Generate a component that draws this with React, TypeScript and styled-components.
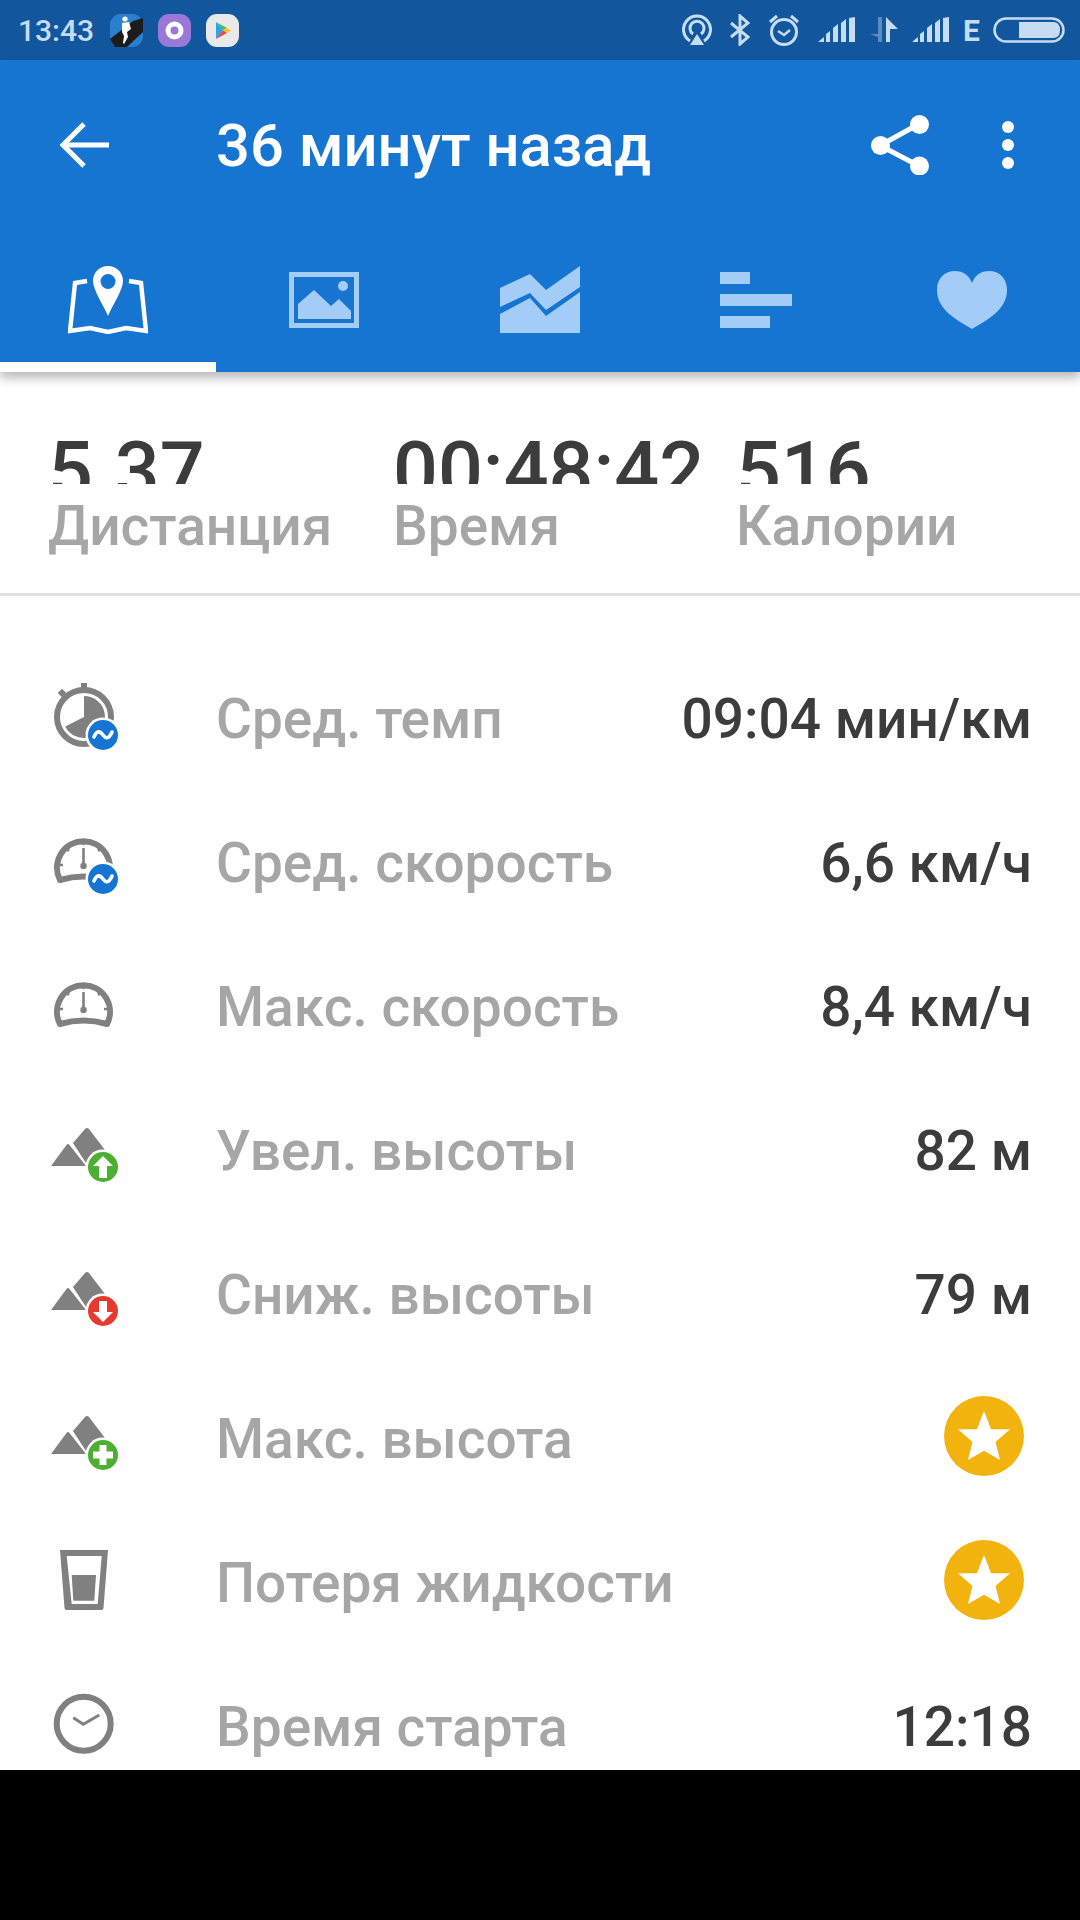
import React from "react";
import styled, { createGlobalStyle } from "styled-components";

const GlobalStyle = createGlobalStyle`
  html, body {
    margin: 0;
    padding: 0;
    background: #000;
    font-family: Roboto, "Noto Sans", sans-serif;
  }
`;

const Screen = styled.div`
  width: 1080px;
  height: 1770px;
  background: #fff;
  overflow: hidden;
`;

const StatusBar = styled.div`
  height: 60px;
  background: #12579d;
  display: flex;
  align-items: center;
  padding: 0 15px 0 18px;
  color: #c6dcf2;
`;

const Time = styled.span`
  font-size: 30px;
  font-weight: 500;
  width: 92px;
`;

const AppIcons = styled.div`
  display: flex;
  gap: 15px;
`;

const SystemIcons = styled.div`
  margin-left: auto;
  display: flex;
  align-items: center;
`;

const SystemIcon = styled.svg<{ $gap?: number }>`
  display: block;
  margin-left: ${p => p.$gap ?? 0}px;
`;

const NetType = styled.span`
  margin-left: 14px;
  width: 16px;
  font-size: 30px;
  font-weight: 700;
`;

const Header = styled.header`
  background: #1675d1;
  height: 312px;
  position: relative;
  z-index: 1;
  box-shadow: 0 6px 10px rgba(0, 0, 0, 0.28);
`;

const Toolbar = styled.div`
  height: 170px;
  display: flex;
  align-items: center;
  padding: 0 0 4px 60px;
  color: #fff;
`;

const Title = styled.h1`
  margin: 2px 0 0 107px;
  font-size: 59.7px;
  font-weight: 500;
`;

const Actions = styled.div`
  margin-left: auto;
  display: flex;
  align-items: center;
  gap: 73px;
  padding-right: 66px;
`;

const Tabs = styled.div`
  display: grid;
  grid-template-columns: repeat(5, 216px);
  height: 138px;
`;

const Tab = styled.div<{ $active?: boolean }>`
  display: flex;
  justify-content: center;
  padding-top: 32px;
  box-sizing: border-box;
  color: ${p => (p.$active ? "#fff" : "#a3cdf7")};
  border-bottom: 10px solid ${p => (p.$active ? "#fff" : "transparent")};
`;

const Stats = styled.section`
  display: grid;
  grid-template-columns: 345px 343px 1fr;
  padding-left: 48px;
  height: 221px;
  border-bottom: 3px solid #e0e0e0;
`;

const StatValue = styled.div`
  box-sizing: border-box;
  height: 112px;
  padding-top: 59px;
  overflow: hidden;
  font-size: 79px;
  line-height: 80px;
  font-weight: 500;
  color: #3c3c3c;
`;

const StatLabel = styled.div`
  font-size: 55px;
  line-height: 60px;
  color: #a6a6a6;
  font-weight: 500;
  margin-top: 12px;
`;

const Rows = styled.div`
  padding-top: 52px;
`;

const Row = styled.div`
  height: 144px;
  display: flex;
  align-items: center;
  padding: 0 48px 0 50px;
`;

const RowIcon = styled.svg`
  width: 80px;
  height: 80px;
  flex: none;
`;

const RowLabel = styled.span`
  margin: 0 0 2px 86px;
  font-size: 55px;
  font-weight: 500;
  color: #a6a6a6;
`;

const RowValue = styled.span`
  margin: 0 0 2px auto;
  font-size: 55px;
  font-weight: 500;
  color: #3c3c3c;
`;

const Premium = styled.svg`
  margin-left: auto;
  margin-right: 8px;
  margin-bottom: 8px;
  width: 80px;
  height: 80px;
`;

const GRAY = "#808080";

const Badge = ({ color, children }: { color: string; children: React.ReactNode }) => (
  <>
    <circle cx="53" cy="55" r="17.5" fill="#fff" />
    <circle cx="53" cy="55" r="15" fill={color} />
    {children}
  </>
);

const AvgBadge = () => (
  <Badge color="#1675d1">
    <path d="M44 57 C47 50 50 51 53 55 S59 59 62 52" fill="none" stroke="#fff" strokeWidth="3.6" strokeLinecap="round" />
  </Badge>
);

const Stopwatch = () => (
  <RowIcon viewBox="0 0 80 80">
    <circle cx="34" cy="37" r="27" fill="none" stroke={GRAY} strokeWidth="6" />
    <rect x="31" y="3" width="6" height="7" fill={GRAY} />
    <rect x="9" y="10" width="6" height="6" fill={GRAY} transform="rotate(-45 12 13)" />
    <path d="M34 37 L34 16 A21 21 0 1 1 15.2 46.4 Z" fill={GRAY} />
    <AvgBadge />
  </RowIcon>
);

const GaugeBody = () => (
  <>
    <path
      d="M10 56 A26.5 26.5 0 1 1 57 56 Q33.5 49 10 56 Z"
      fill="none"
      stroke={GRAY}
      strokeWidth="6"
      strokeLinejoin="round"
    />
    <path
      d="M33.5 15 V21 M14.5 23 L19 27 M52.5 23 L48 27 M7 41 H13 M60 41 H54 M33.5 24 V41"
      stroke={GRAY}
      strokeWidth="2.6"
      fill="none"
    />
    <circle cx="33.5" cy="42" r="3.2" fill={GRAY} />
  </>
);

const AvgGauge = () => (
  <RowIcon viewBox="0 0 80 80">
    <GaugeBody />
    <AvgBadge />
  </RowIcon>
);

const MaxGauge = () => (
  <RowIcon viewBox="0 0 80 80">
    <GaugeBody />
  </RowIcon>
);

const Mountains = ({ children }: { children: React.ReactNode }) => (
  <RowIcon viewBox="0 0 80 80">
    <path d="M1 54 L16.5 33 Q18 31 19.5 33 L36 54 Z" fill={GRAY} />
    <path d="M23 31 L35 17 Q37 15 39 17 L55 38 L36 51 Z" fill={GRAY} />
    {children}
  </RowIcon>
);

const ElevationUp = () => (
  <Mountains>
    <Badge color="#4caf32">
      <path d="M53 44 L63 54 H57 V66 H49 V54 H43 Z" fill="#fff" />
    </Badge>
  </Mountains>
);

const ElevationDown = () => (
  <Mountains>
    <Badge color="#e53a2e">
      <path d="M53 66 L63 56 H57 V45 H49 V56 H43 Z" fill="#fff" />
    </Badge>
  </Mountains>
);

const ElevationMax = () => (
  <Mountains>
    <Badge color="#4caf32">
      <path d="M49.5 45 H56.5 V51.5 H63 V58.5 H56.5 V65 H49.5 V58.5 H43 V51.5 H49.5 Z" fill="#fff" />
    </Badge>
  </Mountains>
);

const Cup = () => (
  <RowIcon viewBox="0 0 80 80">
    <path
      d="M10 6 H58 L53.5 64 Q53.3 66 51.5 66 H16.5 Q14.7 66 14.5 64 Z M16.7 12 L21.7 60 H47.7 L51.7 12 Z"
      fill={GRAY}
      fillRule="evenodd"
    />
    <path d="M21.7 31 H46 L44.3 56.7 H23.3 Z" fill={GRAY} />
  </RowIcon>
);

const Clock = () => (
  <RowIcon viewBox="0 0 80 80">
    <circle cx="33.7" cy="35.7" r="27" fill="none" stroke={GRAY} strokeWidth="6" />
    <path d="M23.3 29.7 L33.3 36.3 L49.3 27" fill="none" stroke={GRAY} strokeWidth="3" />
  </RowIcon>
);

const Star = () => (
  <Premium viewBox="0 0 80 80">
    <circle cx="40" cy="40" r="40" fill="#f3b30f" />
    <path d="M40 14.7 L47 33.3 H66 L51.5 46 L56 64 L40 54.7 L24 64 L28.5 46 L14 33.3 H33 Z" fill="#fff" />
  </Premium>
);

const rows: { icon: React.ReactNode; label: string; value?: string }[] = [
  { icon: <Stopwatch />, label: "Сред. темп", value: "09:04 мин/км" },
  { icon: <AvgGauge />, label: "Сред. скорость", value: "6,6 км/ч" },
  { icon: <MaxGauge />, label: "Макс. скорость", value: "8,4 км/ч" },
  { icon: <ElevationUp />, label: "Увел. высоты", value: "82 м" },
  { icon: <ElevationDown />, label: "Сниж. высоты", value: "79 м" },
  { icon: <ElevationMax />, label: "Макс. высота" },
  { icon: <Cup />, label: "Потеря жидкости" },
  { icon: <Clock />, label: "Время старта", value: "12:18" },
];

const stats = [
  { value: "5.37", label: "Дистанция" },
  { value: "00:48:42", label: "Время" },
  { value: "516", label: "Калории" },
];

const Signal = ({ gap }: { gap: number }) => (
  <SystemIcon $gap={gap} width="37" height="26" viewBox="0 0 37 26" fill="#c6dcf2">
    <path d="M0 25 L6 20 V25 Z M8 25 V17 L12 14 V25 Z M15 25 V11 L20 7 V25 Z M23 25 V6 L28 2 V25 Z" />
    <path d="M31 25 V1 L37 0 V25 Z" />
  </SystemIcon>
);

const StatusIcons = () => (
  <SystemIcons>
    <SystemIcon width="30" height="32" viewBox="0 0 30 32" fill="none" stroke="#c6dcf2" strokeWidth="3">
      <path d="M8 27 A13.5 13.5 0 1 1 22 27" />
      <path d="M11 20 A7 7 0 1 1 19 20" />
      <path d="M15 20 L22 31 H8 Z" fill="#c6dcf2" stroke="none" />
    </SystemIcon>
    <SystemIcon $gap={18} width="20" height="32" viewBox="0 0 20 32" fill="none" stroke="#c6dcf2" strokeWidth="3">
      <path d="M1 9 L18 23 L10 30 V2 L18 9 L1 23" />
    </SystemIcon>
    <SystemIcon $gap={18} width="32" height="32" viewBox="0 0 32 32" fill="none" stroke="#c6dcf2" strokeWidth="3">
      <circle cx="16" cy="18" r="12.5" />
      <path d="M10 17 L16 21 L22 16" strokeWidth="2.5" />
      <path d="M2 8 L9 2 M30 8 L23 2" />
    </SystemIcon>
    <Signal gap={18} />
    <SystemIcon $gap={15} width="28" height="26" viewBox="0 0 28 26">
      <path d="M8 0 H12 V25 H8 V20 L0 17 H8 Z" fill="#5b8dc2" />
      <path d="M16 0 L28 12 H20 V25 H16 Z" fill="#c6dcf2" />
    </SystemIcon>
    <Signal gap={14} />
    <NetType>E</NetType>
    <SystemIcon $gap={14} width="72" height="26" viewBox="0 0 72 26" fill="none">
      <rect x="1.5" y="1.5" width="69" height="23" rx="11.5" stroke="#c6dcf2" strokeWidth="2.5" />
      <path d="M26 5 H60 Q67 5 67 13 Q67 21 60 21 H26 Z" fill="#c6dcf2" />
    </SystemIcon>
  </SystemIcons>
);

const NotificationIcons = () => (
  <AppIcons>
    <svg width="33" height="33" viewBox="0 0 33 33">
      <rect width="33" height="33" rx="11" fill="#2a7fd0" />
      <path d="M0 25 L23 7 L33 4 V18 L17 33 H5 Z" fill="#1c1c1c" />
      <circle cx="15" cy="5" r="2.6" fill="#fff" />
      <path d="M12 9 L19 8 L21 15 L17 18 L18 23 L14 30 L13 29 L14 22 L12 18 Z" fill="#fff" />
    </svg>
    <svg width="33" height="33" viewBox="0 0 33 33">
      <rect width="33" height="33" rx="11" fill="#9a78d8" />
      <circle cx="16.5" cy="16.5" r="6.5" fill="none" stroke="#fff" strokeWidth="5" />
    </svg>
    <svg width="33" height="33" viewBox="0 0 33 33">
      <rect width="33" height="33" rx="11" fill="#e9e9e9" />
      <path d="M10 8 L17 16 L10 25 Z" fill="#27a6e6" />
      <path d="M10 8 L21 14 L17 16 Z" fill="#46b96b" />
      <path d="M10 25 L21 19 L17 16 Z" fill="#e8483f" />
      <path d="M21 14 L25 16.5 L21 19 L17 16 Z" fill="#f7c325" />
    </svg>
  </AppIcons>
);

const MapTabIcon = () => (
  <svg width="80" height="68" viewBox="0 0 80 68">
    <path d="M19 15 L7 17 L2 65 L22 62 L40 66 L58 62 L78 65 L73 17 L61 15" fill="none" stroke="currentColor" strokeWidth="4.4" />
    <path fillRule="evenodd" fill="currentColor" d="M40 0 C31 0 25 7 25 15 C25 24 36 40 40 50 C44 40 55 24 55 15 C55 7 49 0 40 0 Z M40 8 A7.5 7.5 0 1 1 40 23 A7.5 7.5 0 1 1 40 8 Z" />
  </svg>
);

const PhotoTabIcon = () => (
  <svg width="70" height="68" viewBox="0 0 70 68" fill="currentColor">
    <path fillRule="evenodd" d="M0 6 H70 V62 H0 Z M5 11 V57 H65 V11 Z" />
    <path d="M9 53 V38 L25 24 L42 40 L50 33 L62 45 V53 Z" />
    <circle cx="54" cy="20" r="5" />
  </svg>
);

const ChartTabIcon = () => (
  <svg width="80" height="68" viewBox="0 0 80 68" fill="currentColor">
    <path d="M0 22 L30 8 L46 24 L80 0 V21 L46 44 L30 27 L0 41 Z" />
    <path d="M0 48 L30 32 L46 50 L80 26 V67 H0 Z" />
  </svg>
);

const BarsTabIcon = () => (
  <svg width="72" height="68" viewBox="0 0 72 68" fill="currentColor">
    <rect x="0" y="6" width="30" height="12" />
    <rect x="0" y="28" width="72" height="12" />
    <rect x="0" y="50" width="50" height="12" />
  </svg>
);

const HeartTabIcon = () => (
  <svg width="70" height="68" viewBox="0 0 70 68" fill="currentColor">
    <path d="M35 63 C20 54 0 44 0 24 C0 12 8 5 18 5 C26 5 32 9 35 17 C38 9 44 5 52 5 C62 5 70 12 70 24 C70 44 50 54 35 63 Z" />
  </svg>
);

const App = () => (
  <Screen>
    <GlobalStyle />
    <StatusBar>
      <Time>13:43</Time>
      <NotificationIcons />
      <StatusIcons />
    </StatusBar>
    <Header>
      <Toolbar>
        <svg width="49" height="46" viewBox="0 0 49 46" fill="none" stroke="#fff" strokeWidth="5">
          <path d="M49 23 H3 M24 2 L3 23 L24 44" />
        </svg>
        <Title>36 минут назад</Title>
        <Actions>
          <svg width="58" height="60" viewBox="0 0 58 60" fill="#fff">
            <path d="M48 9 L9 30.5 L48 51" fill="none" stroke="#fff" strokeWidth="5" />
            <circle cx="48.5" cy="9.5" r="9.5" />
            <circle cx="9.5" cy="30.5" r="9.5" />
            <circle cx="48.5" cy="51" r="9.5" />
          </svg>
          <svg width="12" height="48" viewBox="0 0 12 48" fill="#fff">
            <circle cx="6" cy="6" r="6" />
            <circle cx="6" cy="24" r="6" />
            <circle cx="6" cy="42" r="6" />
          </svg>
        </Actions>
      </Toolbar>
      <Tabs>
        <Tab $active><MapTabIcon /></Tab>
        <Tab><PhotoTabIcon /></Tab>
        <Tab><ChartTabIcon /></Tab>
        <Tab><BarsTabIcon /></Tab>
        <Tab><HeartTabIcon /></Tab>
      </Tabs>
    </Header>
    <Stats>
      {stats.map(s => (
        <div key={s.label}>
          <StatValue>{s.value}</StatValue>
          <StatLabel>{s.label}</StatLabel>
        </div>
      ))}
    </Stats>
    <Rows>
      {rows.map(r => (
        <Row key={r.label}>
          {r.icon}
          <RowLabel>{r.label}</RowLabel>
          {r.value ? <RowValue>{r.value}</RowValue> : <Star />}
        </Row>
      ))}
    </Rows>
  </Screen>
);

export default App;
